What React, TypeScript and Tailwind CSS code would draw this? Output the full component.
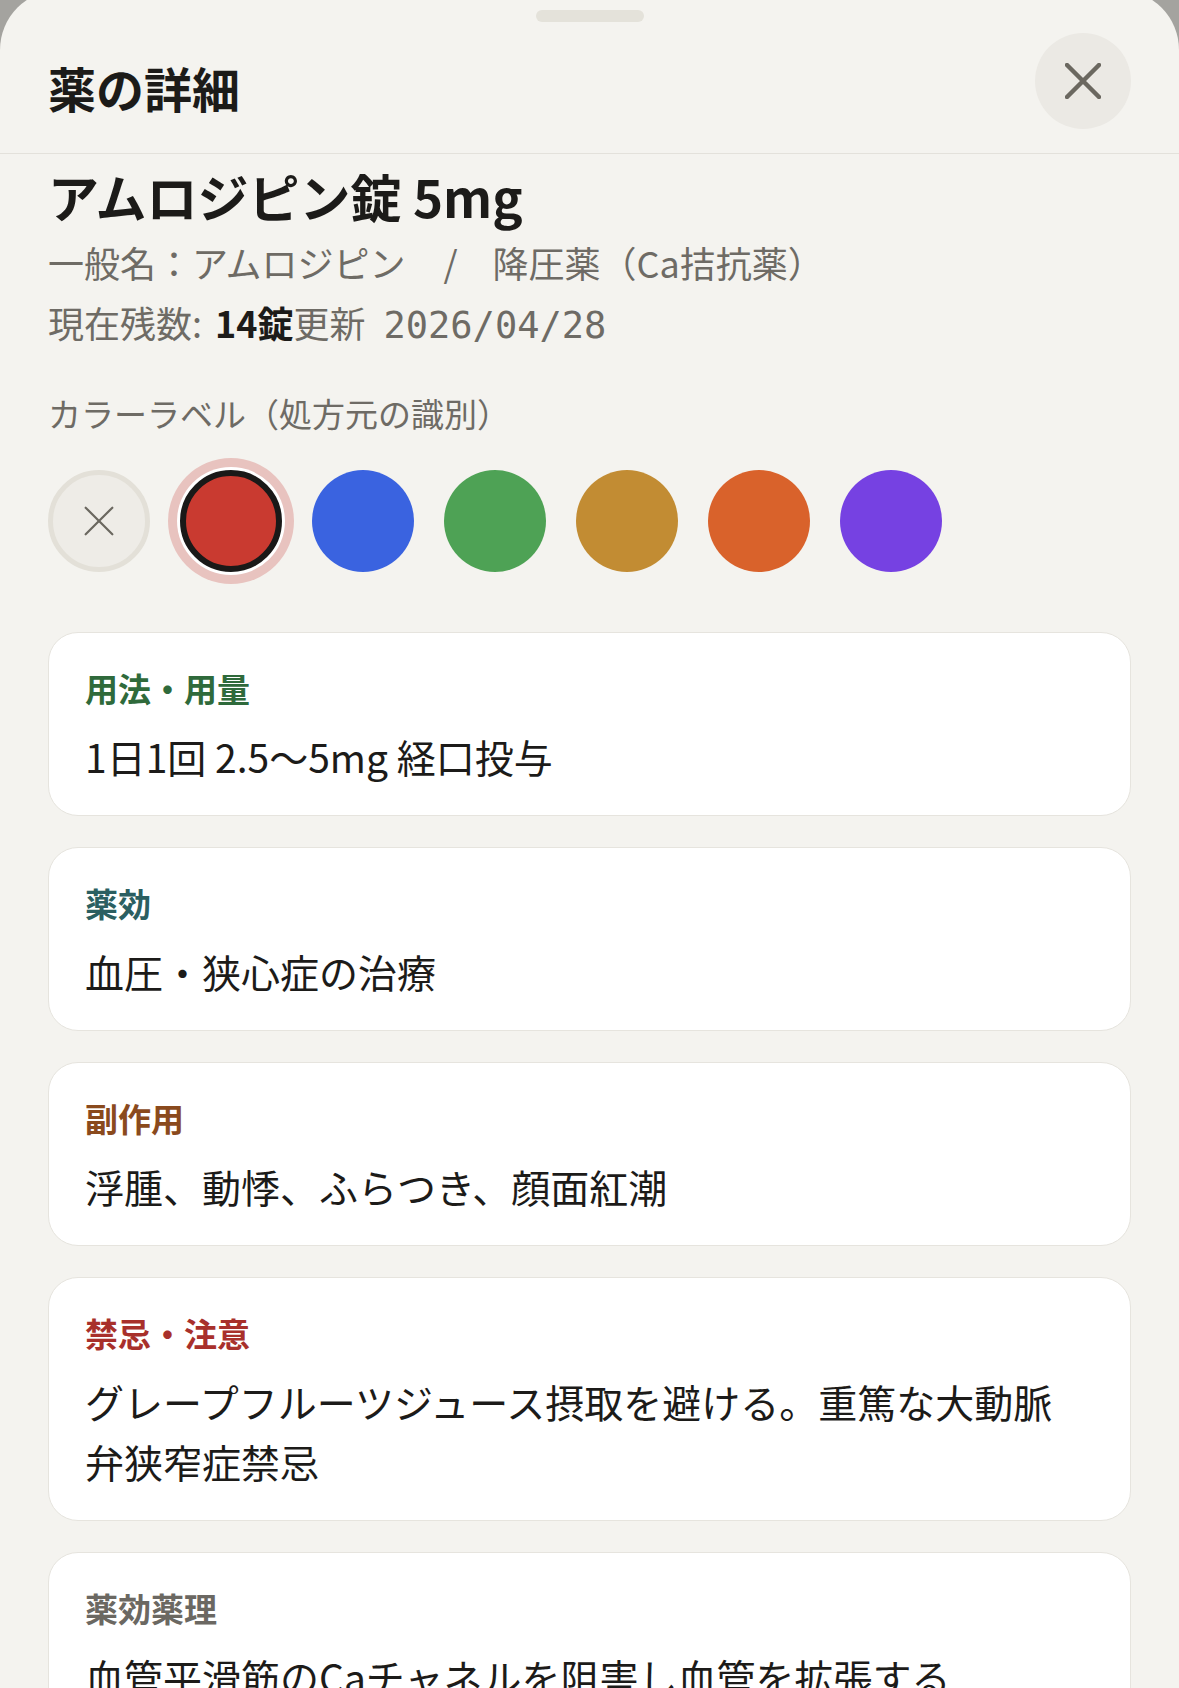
import React from "react";

const FONT = { fontFamily: '"Noto Sans CJK JP", "Noto Sans", sans-serif' };
const MONO = { fontFamily: '"DejaVu Sans Mono", "Liberation Mono", monospace' };

function XIcon({ size, stroke, color }: { size: number; stroke: number; color: string }) {
  return (
    <svg width={size} height={size} viewBox="0 0 36 36" fill="none">
      <path d="M2 2 L34 34 M34 2 L2 34" stroke={color} strokeWidth={stroke} strokeLinecap="round" />
    </svg>
  );
}

const colors = ["#3a63e0", "#4ea255", "#c28c33", "#d9622b", "#7641e2"];

const cards: { label: string; color: string; body: string }[] = [
  { label: "用法・用量", color: "text-[#2f6a3b]", body: "1日1回 2.5〜5mg 経口投与" },
  { label: "薬効", color: "text-[#2b5f61]", body: "血圧・狭心症の治療" },
  { label: "副作用", color: "text-[#8a4a1d]", body: "浮腫、動悸、ふらつき、顔面紅潮" },
  {
    label: "禁忌・注意",
    color: "text-[#a8302b]",
    body: "グレープフルーツジュース摂取を避ける。重篤な大動脈弁狭窄症禁忌",
  },
  { label: "薬効薬理", color: "text-[#6b6862]", body: "血管平滑筋のCaチャネルを阻害し血管を拡張する" },
];

export default function App() {
  return (
    <div className="h-[1688px] w-full overflow-hidden bg-[#a4a39f]" style={FONT}>
      <div className="-mt-[10px] min-h-[1698px] rounded-t-[60px] bg-[#f4f3ef]">
        <div className="flex justify-center pt-[20px]">
          <div className="h-[12px] w-[108px] rounded-full bg-[#e4e2da]" />
        </div>
        <div className="flex h-[132px] items-start justify-between border-b border-[#e3e1db] px-[48px]">
          <h1 className="mt-[29px] text-[48px] font-bold leading-[72px] text-[#1c1b19]">薬の詳細</h1>
          <button className="mt-[11px] flex h-[96px] w-[96px] items-center justify-center rounded-full bg-[#ebe9e4]">
            <XIcon size={36} stroke={4.5} color="#6b6860" />
          </button>
        </div>
        <div className="px-[48px]">
          <div className="mt-[9px] text-[51px] font-bold leading-[66px] text-[#1c1b19]">アムロジピン錠 5mg</div>
          <div className="mt-[3px] text-[36px] leading-[60px] text-[#6e6b65]">
            一般名：アムロジピン<span className="ml-[38px] mr-[35px]">/</span>降圧薬（Ca拮抗薬）
          </div>
          <div className="text-[36px] leading-[60px] text-[#6e6b65]">
            現在残数:<span className="ml-[13px] font-bold text-[#1c1b19]">14錠</span>更新
            <span className="ml-[18px] text-[37px]" style={MONO}>2026/04/28</span>
          </div>
          <div className="mt-[33px] text-[33px] leading-[48px] text-[#6e6b65]">カラーラベル（処方元の識別）</div>
          <div className="mt-[33px] flex gap-[30px]">
            <div className="flex h-[102px] w-[102px] items-center justify-center rounded-full border-[5px] border-[#e3e0d8] bg-[#eeece7]">
              <XIcon size={30} stroke={2.6} color="#6b6860" />
            </div>
            <div className="h-[102px] w-[102px] rounded-full border-[6px] border-[#1a1918] bg-[#c93a30] shadow-[0_0_0_3px_#ffffff,0_0_0_12px_#e8c3bf]" />
            {colors.map((c) => (
              <div key={c} className="h-[102px] w-[102px] rounded-full" style={{ backgroundColor: c }} />
            ))}
          </div>
          <div className="mt-[60px] flex flex-col gap-[31px]">
            {cards.map((card) => (
              <div
                key={card.label}
                className="rounded-[30px] border border-[#e6e4de] bg-white pb-[29px] pl-[36px] pr-[56px] pt-[30px]"
              >
                <div className={`text-[33px] font-bold leading-[50px] ${card.color}`}>{card.label}</div>
                <div className="mt-[13px] text-[39px] leading-[60px] text-[#1c1b19]">{card.body}</div>
              </div>
            ))}
          </div>
        </div>
      </div>
    </div>
  );
}
